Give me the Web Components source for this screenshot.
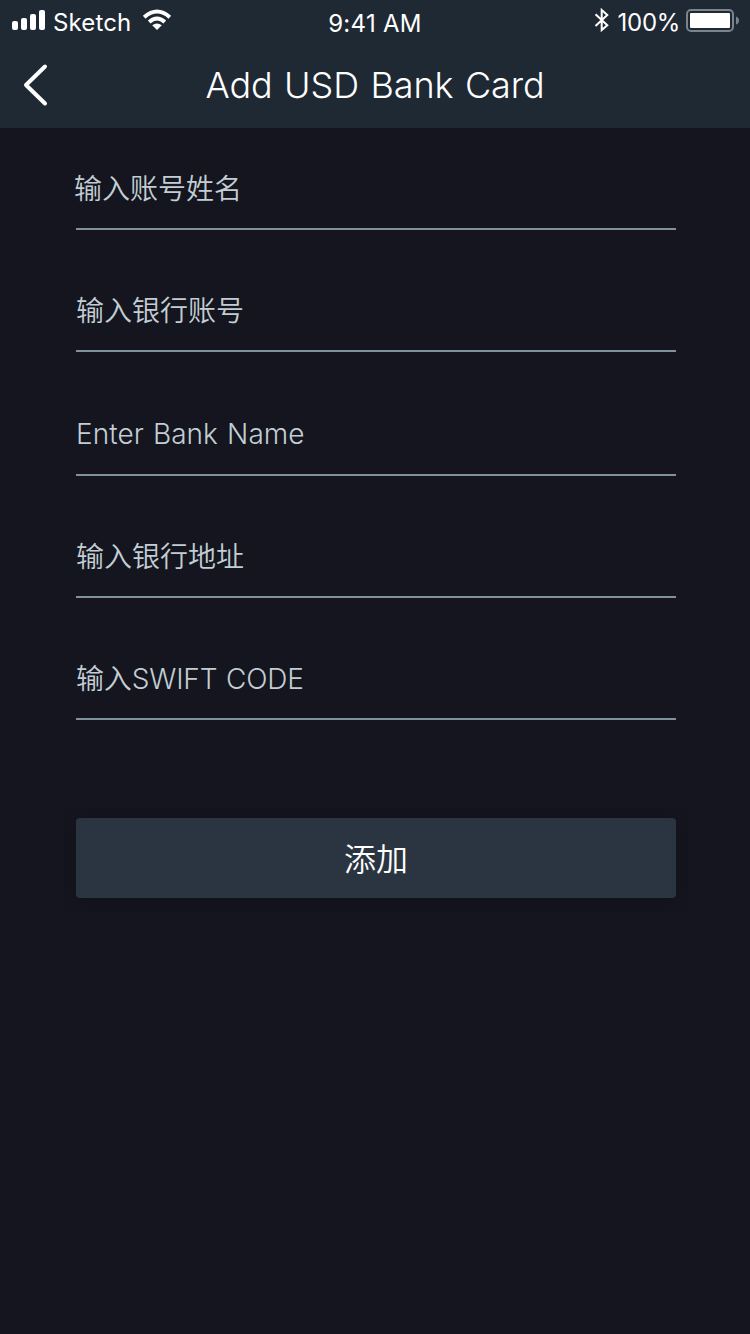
<!DOCTYPE html>
<html lang="zh"><head><meta charset="utf-8"><title>Add USD Bank Card</title>
<style>
html,body{margin:0;background:#14151e}
body{font-family:Inter,"Noto Sans CJK SC",sans-serif;font-weight:350}
</style></head><body>
<bank-card-page></bank-card-page>
<script>
const define=(name,html)=>customElements.define(name,class extends HTMLElement{
  constructor(){super();const t=document.createElement('template');t.innerHTML=html;
    this.attachShadow({mode:'open'}).append(t.content.cloneNode(true));}
});
define('status-bar',`<style>
:host{display:grid;grid-template-columns:1fr auto 1fr;height:44px;color:#fff;font-size:24px;line-height:44px;font-weight:380}
div{display:flex}svg{display:block;flex:none}
.l span{margin-left:7px;padding-top:1px;letter-spacing:.15px;width:77px}
.time{letter-spacing:.3px;padding-top:2px}
.r{justify-content:flex-end}
.r span{margin:0 6px 0 9px;padding-top:1px;letter-spacing:-.3px}
span{white-space:nowrap}
</style>
<div class="l"><svg width="46" height="44" fill="#fff"><rect x="12" y="21" width="6" height="9" rx="2"/><rect x="21" y="18" width="6" height="12" rx="2"/><rect x="30" y="14" width="6" height="16" rx="2"/><rect x="39" y="10" width="6" height="20" rx="2"/></svg><span>Sketch</span>
<svg style="margin-left:12px" width="30" height="44" fill="none" stroke="#fff" stroke-width="4"><path d="M2.2 17.2Q15 5.8 27.8 17.2"/><path d="M7.2 22Q15 15 22.8 22"/><path d="M10.2 25.2Q15 21.6 19.8 25.2L15 30Z" fill="#fff" stroke="none"/></svg></div>
<div class="time"><span>9:41 AM</span></div>
<div class="r"><svg width="15" height="44" fill="none" stroke="#fff" stroke-width="2"><path d="M1.5 14.2L13.3 25.3 7.7 30V10L13.3 15 1.5 26"/></svg><span>100%</span>
<svg width="64" height="44"><rect x="1" y="10" width="46" height="21" rx="4" fill="none" stroke="#7b838b" stroke-width="2"/><rect x="4" y="13" width="40" height="15" rx="1" fill="#fff"/><path d="M50 16.5q3 1 3 4t-3 4z" fill="#7b838b"/></svg></div>`);
define('nav-header',`<style>
:host{display:grid;grid-template-columns:72px 1fr 72px;height:84px;align-items:center;color:#fff}
h1{margin:0;font-size:36px;line-height:82px;height:84px;font-weight:350;text-align:center;letter-spacing:-.1px;word-spacing:1.5px;white-space:nowrap}
svg{display:block}
</style><svg width="72" height="84" fill="none" stroke="#fff" stroke-width="4" stroke-linecap="round" stroke-linejoin="round"><path d="M45 22.5L26 41 45 59.5"/></svg><h1><slot></slot></h1>`);
define('form-field',`<style>
:host{display:block;box-sizing:border-box;height:60px;border-bottom:2px solid #7f919b;color:#c2ced4;font-size:28px;line-height:38px}
span{white-space:nowrap;display:block;margin-left:var(--shift,0);letter-spacing:var(--track,0);word-spacing:var(--gap,0)}
</style><span><slot></slot></span>`);
define('submit-button',`<style>
:host{display:block}
button{display:block;width:100%;height:80px;border:0;border-radius:4px;padding:0 0 2px;background:#2b3541;color:#fff;font:inherit;font-size:32px;box-shadow:0 2px 12px rgba(16,16,24,.45)}
</style><button><slot></slot></button>`);
define('bank-card-page',`<style>
:host{display:flex;flex-direction:column;min-height:1334px;background:#14151e}
header{background:#1f2934;height:128px}
main{display:flex;flex-direction:column;padding:42px 74px 0 76px}
form-field+form-field{margin-top:62px}
form-field:nth-child(3){margin-top:64px;line-height:36px}
submit-button{margin-top:98px}
</style><header><status-bar></status-bar><nav-header><span>Add USD Bank Card</span></nav-header></header>
<main><form-field style="--shift:-2px">输入账号姓名</form-field><form-field>输入银行账号</form-field><form-field style="--track:.05px;--gap:1.2px">Enter Bank Name</form-field><form-field>输入银行地址</form-field><form-field style="--track:-.15px;--gap:1px">输入SWIFT CODE</form-field><submit-button>添加</submit-button></main>`);
</script></body></html>
